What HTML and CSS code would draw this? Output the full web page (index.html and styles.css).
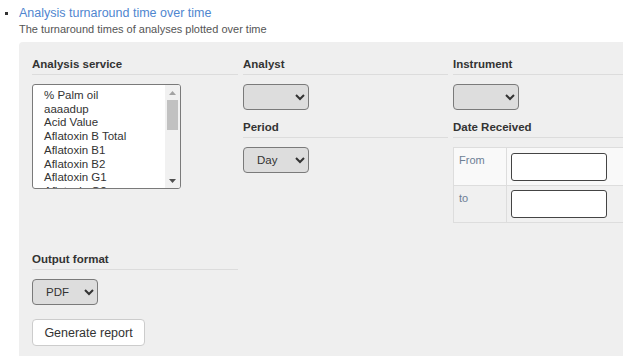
FILE: index.html
```html
<!DOCTYPE html>
<html>
<head>
<meta charset="utf-8">
<link rel="stylesheet" href="styles.css">
</head>
<body>
<div class="report">
  <span class="bullet"></span>
  <div class="report-body">
    <a class="report-title" href="#">Analysis turnaround time over time</a>
    <div class="report-desc">The turnaround times of analyses plotted over time</div>
    <form class="panel">
      <div class="grid">
        <div class="col">
          <div class="field-label">Analysis service</div>
          <div class="listbox" role="listbox" aria-multiselectable="true">
            <div class="listbox-items">
              <div class="opt">% Palm oil</div>
              <div class="opt">aaaadup</div>
              <div class="opt">Acid Value</div>
              <div class="opt">Aflatoxin B Total</div>
              <div class="opt">Aflatoxin B1</div>
              <div class="opt">Aflatoxin B2</div>
              <div class="opt">Aflatoxin G1</div>
              <div class="opt">Aflatoxin G2</div>
            </div>
            <div class="scrollbar">
              <svg class="arrow" width="7" height="4" viewBox="0 0 7 4"><polygon points="0,4 7,4 3.5,0" fill="#a3a3a3"/></svg>
              <div class="thumb"></div>
              <div class="track-rest"></div>
              <svg class="arrow" width="7" height="4" viewBox="0 0 7 4"><polygon points="0,0 7,0 3.5,4" fill="#505050"/></svg>
            </div>
          </div>
        </div>
        <div class="col">
          <div class="field-label">Analyst</div>
          <select class="dropdown"><option></option></select>
          <div class="field-label spaced">Period</div>
          <select class="dropdown"><option>Day</option><option>Week</option><option>Month</option><option>Year</option></select>
        </div>
        <div class="col">
          <div class="field-label">Instrument</div>
          <select class="dropdown"><option></option></select>
          <div class="field-label spaced">Date Received</div>
          <table class="dates">
            <tr class="odd"><td class="dlabel">From</td><td class="dinput"><input type="text"></td></tr>
            <tr><td class="dlabel">to</td><td class="dinput"><input type="text"></td></tr>
          </table>
        </div>
        <div class="col output">
          <div class="field-label">Output format</div>
          <select class="dropdown"><option>PDF</option><option>CSV</option></select>
          <button type="button" class="generate">Generate report</button>
        </div>
      </div>
    </form>
  </div>
</div>
</body>
</html>
```

FILE: styles.css
```css
html, body {
  overflow: hidden;
}
body {
  margin: 0;
  font-family: "Liberation Sans", Arial, sans-serif;
  color: #333;
  background: #fff;
}
.report {
  display: flex;
  align-items: flex-start;
}
.bullet {
  width: 3px;
  height: 3px;
  background: #333;
  margin: 12px 11px 0 5px;
  flex: none;
}
.report-body {
  flex: 1;
  min-width: 0;
}
.report-title {
  display: block;
  font-size: 12.5px;
  line-height: 16px;
  padding-top: 5px;
  color: #4f86cf;
  text-decoration: none;
}
.report-desc {
  font-size: 11px;
  line-height: 15px;
  margin-top: 1px;
  color: #555;
}
.panel {
  margin-top: 5px;
  background: #efefef;
  border-radius: 4px 0 0 0;
  padding: 16px 0 20px 13px;
  overflow: hidden;
}
.grid {
  display: grid;
  grid-template-columns: 206px 205px 205px;
  column-gap: 5px;
}
.col {
  display: flex;
  flex-direction: column;
  align-items: flex-start;
}
.field-label {
  align-self: stretch;
  font-size: 11.5px;
  font-weight: bold;
  line-height: 12px;
  padding-bottom: 4px;
  border-bottom: 1px solid #dcdcdc;
  margin-bottom: 9px;
  color: #333;
}
.field-label.spaced {
  margin-top: 11px;
}
.listbox {
  display: flex;
  width: 149px;
  height: 105px;
  box-sizing: border-box;
  border: 1px solid #7a7a7a;
  border-radius: 3px;
  background: #fff;
  overflow: hidden;
}
.listbox-items {
  flex: 1;
  min-width: 0;
  padding: 4px 0 0 11px;
  font-size: 11.5px;
  line-height: 13.7px;
  color: #333;
  white-space: nowrap;
  overflow: hidden;
}
.scrollbar {
  flex: none;
  width: 15px;
  background: #f1f1f1;
  display: flex;
  flex-direction: column;
  align-items: center;
  padding: 6px 0 5px;
  box-sizing: border-box;
}
.scrollbar .arrow {
  display: block;
  flex: none;
}
.thumb {
  width: 11px;
  height: 30px;
  margin-top: 5px;
  background: #c1c1c1;
}
.track-rest {
  flex: 1;
}
.dropdown {
  width: 66px;
  height: 26px;
  box-sizing: border-box;
  font-family: "Liberation Sans", Arial, sans-serif;
  font-size: 11.5px;
  color: #333;
  background-color: #dddddd;
  border: 1px solid #7a7a7a;
  border-radius: 4px;
  padding: 0 0 0 9px;
}
.dates {
  border-collapse: collapse;
  width: 205px;
  font-size: 11px;
}
.dates td {
  border: 1px solid #dddddd;
  vertical-align: top;
}
.dates tr td {
  background: #f0f0f0;
}
.dates tr.odd td {
  background: #f9f9f9;
}
.dlabel {
  width: 42px;
  padding: 6px 5px 5px 5px;
  color: #6d7f95;
}
.dinput {
  padding: 5px 4px 4px 4px;
  height: 28px;
}
.dates tr + tr .dinput {
  padding: 4px 4px 4px 4px;
}
.dinput input {
  display: block;
  width: 96px;
  height: 28px;
  box-sizing: border-box;
  border: 1px solid #444;
  border-radius: 3px;
  background: #fff;
  padding: 0 4px;
}
.output {
  margin-top: 30px;
}
.generate {
  margin-top: 14px;
  width: 113px;
  height: 27px;
  background: #fff;
  border: 1px solid #cccccc;
  border-radius: 4px;
  font-family: "Liberation Sans", Arial, sans-serif;
  font-size: 12.5px;
  color: #333;
  padding: 0;
}
```
